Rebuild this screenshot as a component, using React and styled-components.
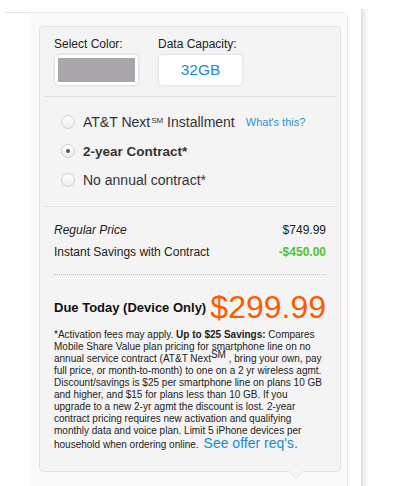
import React from "react";
import styled, { createGlobalStyle } from "styled-components";

const Global = createGlobalStyle`
  html, body { margin: 0; padding: 0; background: #fff; }
  body { font-family: "Liberation Sans", Arial, sans-serif; color: #333; }
`;

const Page = styled.div`
  display: flex;
  align-items: flex-start;
  width: 414px;
  height: 486px;
  overflow: hidden;
`;

const Section = styled.div`
  margin-top: 12px;
  margin-left: 5px;
  width: 342px;
  border-top: 1px solid #e6e6e6;
  border-right: 1px solid #e6e6e6;
  border-top-right-radius: 6px;
  display: flex;
  flex-direction: column;
  height: 480px;
`;

const Card = styled.div`
  margin-left: 25px;
  padding: 13px 6px 14px 9px;
  background: #fafafa;
  display: flex;
  flex-direction: column;
`;

const Panel = styled.div`
  position: relative;
  background: #f4f4f4;
  border: 1px solid #e2e2e2;
  border-radius: 4px;
  padding-bottom: 20px;

  &::before, &::after {
    content: "";
    position: absolute;
    left: 248px;
    width: 0;
    height: 0;
    border-left: 8px solid transparent;
    border-right: 8px solid transparent;
  }
  &::before {
    bottom: -8px;
    border-top: 8px solid #e2e2e2;
  }
  &::after {
    bottom: -7px;
    border-top: 8px solid #f4f4f4;
  }
`;

const NextSection = styled.div`
  margin-left: 25px;
  margin-right: 6px;
  border-top: 2px solid #cfcfcf;
`;

const SideShadow = styled.div`
  margin-top: 9px;
  margin-left: 13px;
  width: 8px;
  height: 477px;
  background: linear-gradient(to right, #dedede, #f2f2f2 50%, #fff);
`;

const Options = styled.div`
  display: flex;
  padding: 10px 14px 11px 14px;
`;

const OptionGroup = styled.div`
  display: flex;
  flex-direction: column;
  width: 104px;
`;

const OptionLabel = styled.div`
  font-size: 12px;
  line-height: 15px;
  color: #222;
  margin-bottom: 3px;
`;

const Swatch = styled.div`
  margin-left: 1px;
  width: 77px;
  height: 24px;
  border: 3px solid #fff;
  border-radius: 4px;
  background: #a9a7ab;
  box-shadow: 0 0 3px rgba(0, 0, 0, 0.2);
`;

const Capacity = styled.div`
  margin-left: 1px;
  width: 83px;
  height: 30px;
  border-radius: 4px;
  background: #fff;
  box-shadow: 0 0 3px rgba(0, 0, 0, 0.15);
  display: flex;
  align-items: center;
  justify-content: center;
  font-size: 15.5px;
  color: #1a8bd0;
`;

const Divider = styled.div`
  margin: 0 4px;
  border-top: 1px solid #e0e0e0;
`;

const Radios = styled.div`
  display: flex;
  flex-direction: column;
  padding: 15px 14px 16px 21px;
  gap: 9px;
`;

const RadioRow = styled.label`
  display: flex;
  align-items: center;
  height: 20px;
  font-size: ${(p) => (p.$bold ? "13.5px" : "14px")};
  color: #333;
  font-weight: ${(p) => (p.$bold ? "bold" : "normal")};
`;

const RadioCircle = styled.span`
  position: relative;
  box-sizing: border-box;
  width: 14px;
  height: 14px;
  border-radius: 50%;
  border: 1px solid #cfcfcf;
  background: linear-gradient(#fff, #ececec);
  margin-right: 8px;
  flex: none;

  &::after {
    content: "";
    display: ${(p) => (p.$checked ? "block" : "none")};
    position: absolute;
    left: 4px;
    top: 4px;
    width: 4px;
    height: 4px;
    border-radius: 50%;
    background: #555;
  }
`;

const Sup = styled.sup`
  font-size: 8px;
  vertical-align: top;
  position: relative;
  top: -2px;
  margin-left: 1px;
`;

const HelpLink = styled.a`
  margin-left: 11px;
  font-size: 11px;
  font-weight: normal;
  color: #2a93cf;
  text-decoration: none;
`;

const Prices = styled.div`
  padding: 12px 14px 0 14px;
`;

const PriceRow = styled.div`
  display: flex;
  justify-content: space-between;
  align-items: center;
  height: 22px;
  font-size: 12px;
  color: #222;
  font-style: ${(p) => (p.$italic ? "italic" : "normal")};
`;

const Amount = styled.span`
  font-style: normal;
  color: ${(p) => (p.$green ? "#55c02a" : "#222")};
  font-weight: ${(p) => (p.$green ? "bold" : "normal")};
`;

const Dotted = styled.div`
  margin-top: 11px;
  border-top: 1px dotted #c4c4c4;
`;

const DueRow = styled.div`
  display: flex;
  justify-content: space-between;
  align-items: center;
  margin-top: 14px;
  height: 36px;
`;

const DueLabel = styled.span`
  font-size: 13px;
  font-weight: bold;
  color: #111;
  white-space: nowrap;
`;

const DuePrice = styled.span`
  font-size: 32px;
  color: #ff5a00;
  line-height: 36px;
  white-space: nowrap;
`;

const FinePrint = styled.p`
  margin: 4px 0 0 0;
  font-size: 10px;
  line-height: 12px;
  color: #222;

  sup {
    font-size: 10px;
    line-height: 0;
  }
`;

const OfferLink = styled.a`
  margin-left: 5px;
  font-size: 14px;
  line-height: 12px;
  color: #1a8bd0;
  text-decoration: none;
`;

export default function App() {
  return (
    <>
      <Global />
      <Page>
        <Section>
          <Card>
            <Panel>
              <Options>
                <OptionGroup>
                  <OptionLabel>Select Color:</OptionLabel>
                  <Swatch />
                </OptionGroup>
                <OptionGroup>
                  <OptionLabel>Data Capacity:</OptionLabel>
                  <Capacity>32GB</Capacity>
                </OptionGroup>
              </Options>
              <Divider />
              <Radios>
                <RadioRow>
                  <RadioCircle />
                  AT&amp;T Next<Sup>SM</Sup>&nbsp;Installment
                  <HelpLink href="#">What's this?</HelpLink>
                </RadioRow>
                <RadioRow $bold>
                  <RadioCircle $checked />
                  2-year Contract*
                </RadioRow>
                <RadioRow>
                  <RadioCircle />
                  No annual contract*
                </RadioRow>
              </Radios>
              <Divider />
              <Prices>
                <PriceRow $italic>
                  Regular Price<Amount>$749.99</Amount>
                </PriceRow>
                <PriceRow>
                  Instant Savings with Contract<Amount $green>-$450.00</Amount>
                </PriceRow>
                <Dotted />
                <DueRow>
                  <DueLabel>Due Today (Device Only)</DueLabel>
                  <DuePrice>$299.99</DuePrice>
                </DueRow>
                <FinePrint>
                  *Activation fees may apply. <b>Up to $25 Savings:</b> Compares
                  Mobile Share Value plan pricing for smartphone line on no
                  annual service contract (AT&amp;T Next<sup>SM</sup> , bring your
                  own, pay full price, or month-to-month) to one on a 2 yr wireless
                  agmt. Discount/savings is $25 per smartphone line on plans 10 GB
                  and higher, and $15 for plans less than 10 GB. If you upgrade to a
                  new 2-yr agmt the discount is lost. 2-year contract pricing
                  requires new activation and qualifying monthly data and voice
                  plan. Limit 5 iPhone devices per household when ordering online.
                  <OfferLink href="#">See offer req's.</OfferLink>
                </FinePrint>
              </Prices>
            </Panel>
          </Card>
          <NextSection />
        </Section>
        <SideShadow />
      </Page>
    </>
  );
}
